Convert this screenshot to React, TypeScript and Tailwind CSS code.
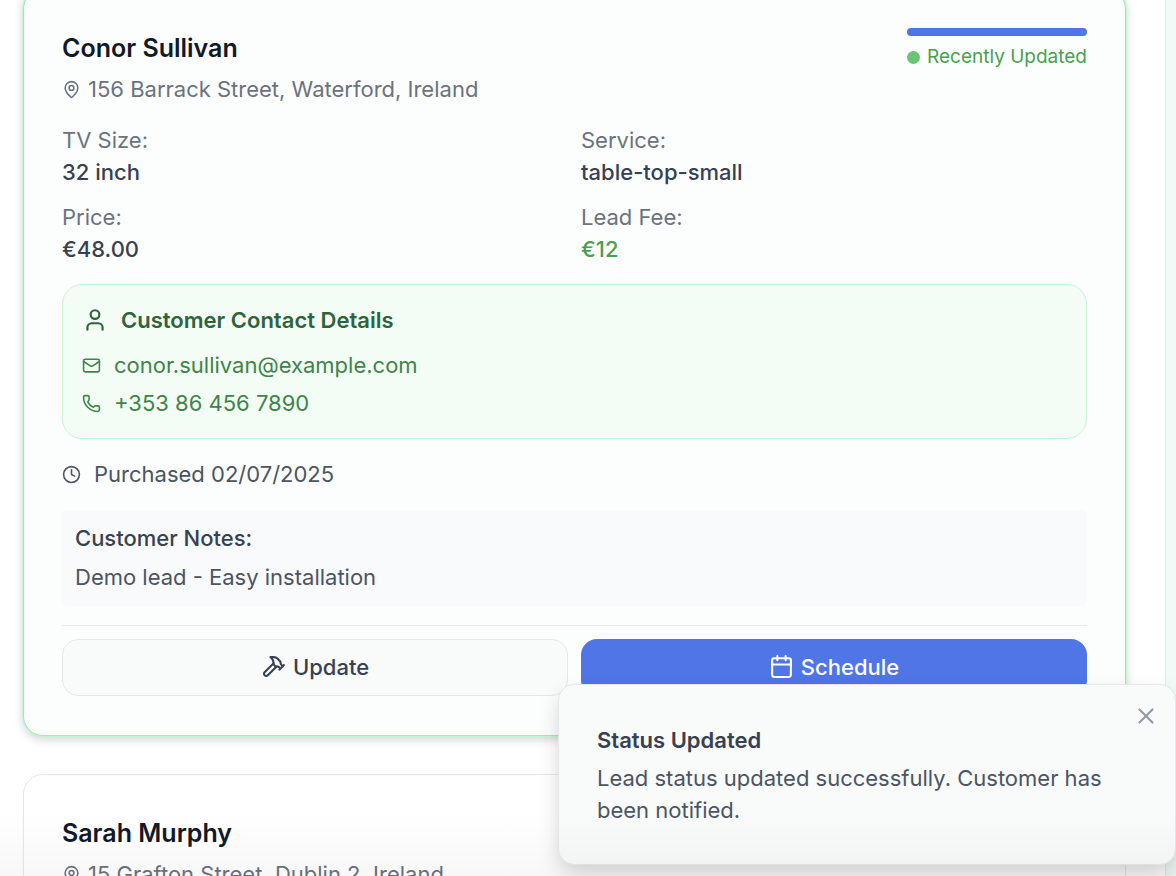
import React from "react";
import { Calendar, Clock, Mail, MapPin, Phone, User, X } from "lucide-react";

function HammerIcon() {
  return (
    <svg
      width="25"
      height="25"
      viewBox="0 0 24 24"
      fill="none"
      stroke="currentColor"
      strokeWidth="2"
      strokeLinecap="round"
      strokeLinejoin="round"
      aria-hidden="true"
    >
      <path d="m15 12-8.5 8.5c-.83.83-2.17.83-3 0a2.12 2.12 0 0 1 0-3L12 9" />
      <path d="M17.64 15 22 10.64" />
      <path d="m20.91 11.7-1.25-1.25c-.6-.6-.93-1.4-.93-2.25v-.86L16.01 4.6a5.56 5.56 0 0 0-3.94-1.64H9l.92.82A6.18 6.18 0 0 1 12 8.4v1.56l2 2h2.47l2.26 1.91" />
    </svg>
  );
}

function Detail({ label, value, accent = false }: { label: string; value: string; accent?: boolean }) {
  return (
    <div>
      <dt className="text-[#6b7280]">{label}</dt>
      <dd className={accent ? "font-medium text-[#4a9f50]" : "font-medium text-[#374151]"}>{value}</dd>
    </div>
  );
}

function LeadHeading({ name, address }: { name: string; address: string }) {
  return (
    <div>
      <h2 className="text-[25px] leading-10 font-semibold text-[#111827]">{name}</h2>
      <p className="mt-[5px] flex items-center gap-[7px] text-[#6b7280]">
        <MapPin size={19} />
        {address}
      </p>
    </div>
  );
}

function UpdatedLead() {
  return (
    <article className="rounded-[20px] border border-[#a1eab5] bg-[#fcfefd] px-[38px] pt-[38px] pb-[39px] shadow-[0_0_0_1px_#c0f5d0,0_3px_8px_1px_rgba(0,0,0,0.16)]">
      <div className="flex items-start justify-between">
        <LeadHeading name="Conor Sullivan" address="156 Barrack Street, Waterford, Ireland" />
        <div className="text-[19px] leading-7 text-[#4a9f50]">
          <div className="h-2 rounded-full bg-[#4f75e6]" />
          <p className="mt-[7px] flex items-center gap-[7px]">
            <span className="size-[13px] rounded-full bg-[#69c574]" />
            Recently Updated
          </p>
        </div>
      </div>

      <dl className="mt-[19px] grid grid-cols-2 gap-x-[13px] gap-y-[13px]">
        <Detail label="TV Size:" value="32 inch" />
        <Detail label="Service:" value="table-top-small" />
        <Detail label="Price:" value="€48.00" />
        <Detail label="Lead Fee:" value="€12" accent />
      </dl>

      <section className="mt-[19px] rounded-[20px] border border-[#c9f3d5] bg-[#f3fdf6] p-[19px] text-[#3f8448]">
        <h3 className="flex items-center gap-[13px] font-semibold text-[#2f6339]">
          <User size={26} />
          Customer Contact Details
        </h3>
        <a href="mailto:conor.sullivan@example.com" className="mt-[13px] flex items-center gap-[13px]">
          <Mail size={19} />
          conor.sullivan@example.com
        </a>
        <a href="tel:+353864567890" className="mt-[6px] flex items-center gap-[13px]">
          <Phone size={19} />
          +353 86 456 7890
        </a>
      </section>

      <p className="mt-[19px] flex items-center gap-[13px] text-[#4b5563]">
        <Clock size={19} />
        Purchased 02/07/2025
      </p>

      <section className="mt-[20px] rounded-md bg-[#f9fafc] px-[13px] pt-[12px] pb-[13px]">
        <h3 className="font-medium text-[#374151]">Customer Notes:</h3>
        <p className="mt-[7px] text-[#4b5563]">Demo lead - Easy installation</p>
      </section>

      <div className="mt-[19px] grid grid-cols-2 gap-[13px] border-t border-[#e5e7eb] pt-[13px] font-medium">
        <button className="flex h-[57px] items-center justify-center gap-[7px] rounded-[16px] border border-[#e5e7eb] bg-[#f9fafa] pb-[2px] text-[#374151]">
          <HammerIcon />
          Update
        </button>
        <button className="flex h-[57px] items-center justify-center gap-[7px] rounded-[16px] bg-[#4f75e6] pb-[2px] text-white">
          <Calendar size={25} />
          Schedule
        </button>
      </div>
    </article>
  );
}

function Toast() {
  return (
    <div
      role="status"
      className="absolute right-0 bottom-[11px] w-[618px] rounded-[16px] border border-[#e5e7eb] bg-[#f9fafa] px-[38px] pt-[39px] pb-[38px] shadow-[0_10px_22px_-2px_rgba(0,0,0,0.18)]"
    >
      <button aria-label="Close" className="absolute top-[18px] right-[16px] text-[#949aa5]">
        <X size={26} />
      </button>
      <p className="font-semibold text-[#374151]">Status Updated</p>
      <p className="mt-[6px] text-[#4b5563]">Lead status updated successfully. Customer has been notified.</p>
    </div>
  );
}

export default function App() {
  return (
    <div className="relative h-screen overflow-hidden bg-[#f0faf6] pr-[10px] font-['Inter',sans-serif] text-[22px] leading-8">
      <main className="flex h-full flex-col border-r border-[#e5e7eb] bg-white pr-[39px] pl-[23px]">
        <div className="-mt-[11px] flex flex-col gap-[38px]">
          <UpdatedLead />
          <article className="rounded-[20px] border border-[#e5e7eb] bg-white p-[38px] shadow-xs">
            <LeadHeading name="Sarah Murphy" address="15 Grafton Street, Dublin 2, Ireland" />
          </article>
        </div>
      </main>
      <Toast />
      <div className="pointer-events-none absolute inset-x-0 bottom-0 h-16 bg-linear-to-b from-transparent to-black/3" />
    </div>
  );
}
